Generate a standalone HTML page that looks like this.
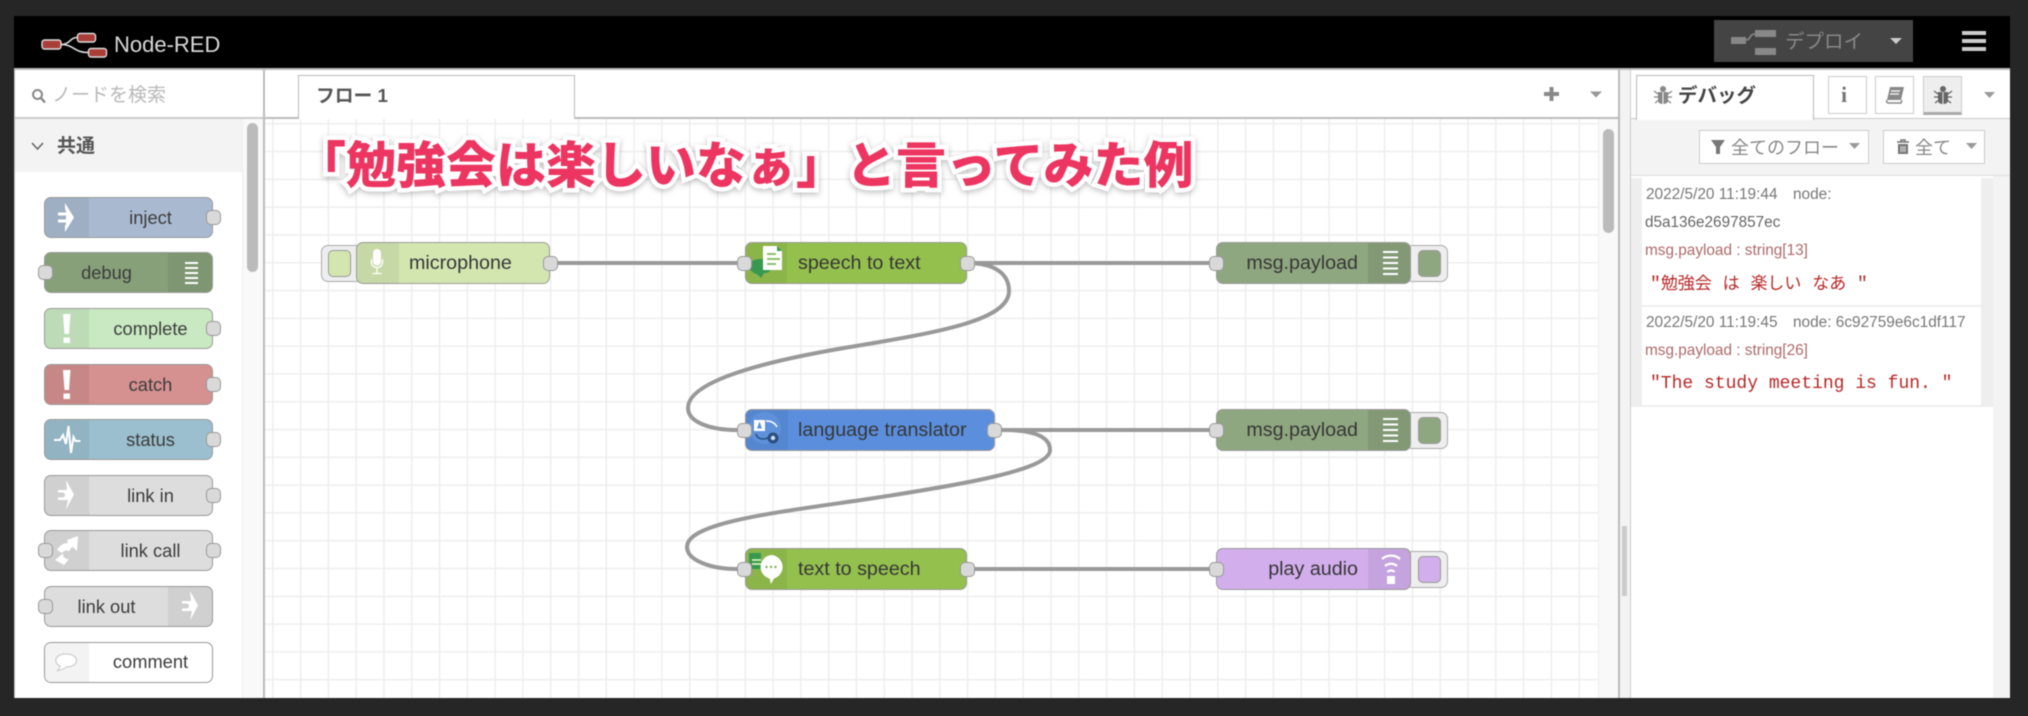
<!DOCTYPE html>
<html lang="ja">
<head>
<meta charset="utf-8">
<title>Node-RED</title>
<style>
html,body{margin:0;padding:0;width:2028px;height:716px;overflow:hidden;background:#262626}
*{box-sizing:border-box}
body{font-family:"Liberation Sans","Noto Sans CJK JP",sans-serif;color:#333;position:relative}
.a,.n,.p,.l,.ic,.b,.t{position:absolute}
#app{position:absolute;left:0;top:0;width:2028px;height:716px;filter:blur(.45px)}
.n{border:1.4px solid #999;border-radius:7px;overflow:hidden}
.ic{top:0;bottom:0;background:rgba(0,0,0,.06)}
.p{width:15px;height:15px;background:#d9d9d9;border:1.4px solid #999;border-radius:5px}
.l{white-space:nowrap;color:#333}
.pl{font-size:18.3px;line-height:20px;text-align:center;color:#3c3c3c}
.wl{font-size:19.7px;line-height:24px;color:#363636}
.b{background:#eee;border:1.4px solid #aaa;border-radius:7px}
.bi{position:absolute;width:23px;height:27px;border:1.4px solid #999;border-radius:5px}
.t{white-space:nowrap}
.btn{position:absolute;background:#fff;border:1.4px solid #ccc}
svg{position:absolute;overflow:visible}
</style>
</head>
<body>
<div id="app">
<!-- frame -->
<div class="a" style="left:14px;top:16px;width:1996px;height:682px;background:#fff"></div>
<!-- header -->
<div class="a" style="left:14px;top:16px;width:1996px;height:52px;background:#000"></div>
<div class="a" style="left:14px;top:68px;width:1996px;height:2px;background:#bbb"></div>
<svg style="left:0;top:0" width="120" height="68">
<path d="M61 44.5C70 44.5 70 37.5 77 37.5M61 44.5C74 44.5 74 52.5 88 52.5" fill="none" stroke="#ddd" stroke-width="1.6"/>
<rect x="42" y="40" width="19" height="9" rx="2.5" fill="#aa3d37" stroke="#ddd" stroke-width="1.4"/>
<rect x="77.5" y="33.5" width="18" height="8.5" rx="2.5" fill="#aa3d37" stroke="#ddd" stroke-width="1.4"/>
<rect x="88.5" y="48.5" width="18" height="8.5" rx="2.5" fill="#aa3d37" stroke="#ddd" stroke-width="1.4"/>
</svg>
<div class="t" style="left:114px;top:32px;font-size:22px;line-height:26px;color:#d8d8d8">Node-RED</div>
<div class="a" style="left:1714px;top:20px;width:199px;height:42px;background:#444"></div>
<svg style="left:1714px;top:20px" width="199" height="42">
<rect x="17" y="17" width="15" height="7" fill="#888"/>
<rect x="41" y="10" width="21" height="7" fill="#888"/>
<rect x="41" y="28" width="21" height="7" fill="#888"/>
<path d="M32 20C37 20 35 14 41 14" fill="none" stroke="#888" stroke-width="1.6"/>
<path d="M176 18h12l-6 6z" fill="#ccc"/>
</svg>
<div class="t" style="left:1785px;top:29px;font-size:19.5px;line-height:26px;color:#888">デプロイ</div>
<div class="a" style="left:1962px;top:31px;width:24px;height:4px;background:#ccc"></div>
<div class="a" style="left:1962px;top:39px;width:24px;height:4px;background:#ccc"></div>
<div class="a" style="left:1962px;top:47px;width:24px;height:4px;background:#ccc"></div>

<!-- palette -->
<div class="a" style="left:14px;top:70px;width:249px;height:628px;background:#fff;border-left:1.5px solid #bbb"></div>
<div class="a" style="left:242px;top:119px;width:21px;height:579px;background:#f9f9f9;border-left:1px solid #eee"></div>
<div class="a" style="left:15px;top:117px;width:249px;height:2px;background:#ccc"></div>
<div class="a" style="left:263px;top:70px;width:1.5px;height:628px;background:#bbb"></div>
<svg style="left:31px;top:88px" width="16" height="16"><circle cx="6.500" cy="6.500" r="4.500" fill="none" stroke="#888" stroke-width="2"/><path d="M10 10l4 4.500" stroke="#888" stroke-width="2.400"/></svg>
<div class="t" style="left:52px;top:83px;font-size:19px;line-height:26px;color:#b8b8b8">ノードを検索</div>
<div class="a" style="left:15px;top:119px;width:227px;height:53px;background:#f3f3f3"></div>
<svg style="left:30px;top:141px" width="16" height="12"><path d="M2 2l5.500 6L13 2" fill="none" stroke="#666" stroke-width="1.600"/></svg>
<div class="t" style="left:57px;top:134px;font-size:19px;line-height:26px;font-weight:700;color:#555">共通</div>
<div class="a" style="left:247px;top:123px;width:11px;height:149px;background:#bbb;border-radius:6px"></div>

<!-- palette nodes -->
<div class="n" style="left:44px;top:197px;width:169px;height:41px;background:#a9bad0"><div class="ic" style="left:0;width:44px"></div></div>
<svg style="left:44px;top:197px" width="44" height="41"><path d="M21 6L30 20.500 21 35V29L25.500 20.500 21 12zM14 15.500h8v3h-8zM14 22.500h8v3h-8zM22 13l5 7.500-5 7.500z" fill="#fff"/></svg>
<div class="l pl" style="left:88px;top:208px;width:125px">inject</div>
<div class="p" style="left:206px;top:210px"></div>

<div class="n" style="left:44px;top:252px;width:169px;height:41px;background:#87a07a"><div class="ic" style="right:0;width:44px"></div></div>
<svg style="left:185px;top:262px" width="14" height="24"><path d="M0 1h13M0 6h13M0 11h13M0 16h13M0 21h13" stroke="#fff" stroke-width="2"/></svg>
<div class="l pl" style="left:44px;top:263px;width:125px">debug</div>
<div class="p" style="left:38px;top:265px"></div>

<div class="n" style="left:44px;top:308px;width:169px;height:41px;background:#c9e9c2"><div class="ic" style="left:0;width:44px"></div></div>
<svg style="left:62px;top:314px" width="10" height="30"><path d="M1 0h7.500L7 20H2.500zM1.500 23.500h6.500V29H1.500z" fill="#fff"/></svg>
<div class="l pl" style="left:88px;top:319px;width:125px">complete</div>
<div class="p" style="left:206px;top:321px"></div>

<div class="n" style="left:44px;top:364px;width:169px;height:41px;background:#d59090"><div class="ic" style="left:0;width:44px"></div></div>
<svg style="left:62px;top:370px" width="10" height="30"><path d="M1 0h7.500L7 20H2.500zM1.500 23.500h6.500V29H1.500z" fill="#fff"/></svg>
<div class="l pl" style="left:88px;top:375px;width:125px">catch</div>
<div class="p" style="left:206px;top:377px"></div>

<div class="n" style="left:44px;top:419px;width:169px;height:41px;background:#9bbfcf"><div class="ic" style="left:0;width:44px"></div></div>
<svg style="left:53px;top:424px" width="27" height="32"><path d="M1 16h6l3-5 3 9 2.500-18 2.500 27 2.500-16 2 4h5" fill="none" stroke="#fff" stroke-width="2"/></svg>
<div class="l pl" style="left:88px;top:430px;width:125px">status</div>
<div class="p" style="left:206px;top:432px"></div>

<div class="n" style="left:44px;top:475px;width:169px;height:41px;background:#ddd"><div class="ic" style="left:0;width:44px"></div></div>
<svg style="left:58px;top:480px" width="17" height="30"><path d="M8 0l8 14.500-8 15 2-9.500H0v-2.500h4.500a2.500 2.500 0 0 0 0-5H0V10h9z" fill="#fff"/></svg>
<div class="l pl" style="left:88px;top:486px;width:125px">link in</div>
<div class="p" style="left:206px;top:488px"></div>

<div class="n" style="left:44px;top:530px;width:169px;height:41px;background:#ddd"><div class="ic" style="left:0;width:44px"></div></div>
<svg style="left:55px;top:536px" width="24" height="30"><path d="M23 0L22 15 17.500 10.500 14 15a5.500 5.500 0 0 0-7 2L2 14C5 9 9 7 13 7l-1-3zM8 17.500a5 5 0 0 0 6 5.500L9 29 0 24z" fill="#fff"/></svg>
<div class="l pl" style="left:88px;top:541px;width:125px">link call</div>
<div class="p" style="left:38px;top:543px"></div>
<div class="p" style="left:206px;top:543px"></div>

<div class="n" style="left:44px;top:586px;width:169px;height:41px;background:#ddd"><div class="ic" style="right:0;width:44px"></div></div>
<svg style="left:182px;top:591px" width="17" height="30"><path d="M8 0l8 14.500-8 15 2-9.500H0v-2.500h4.500a2.500 2.500 0 0 0 0-5H0V10h9z" fill="#fff"/></svg>
<div class="l pl" style="left:44px;top:597px;width:125px">link out</div>
<div class="p" style="left:38px;top:599px"></div>

<div class="n" style="left:44px;top:642px;width:169px;height:41px;background:#fff"><div class="ic" style="left:0;width:44px;background:#f3f3f3"></div></div>
<svg style="left:55px;top:653px" width="24" height="20"><path d="M11 1C17 1 21.500 3.500 21.500 7.500S17 14 11 14C9 16 6 17 2.500 17.500 4 16 5 15 5 13 3 12 .8 10 .8 7.500.8 3.500 5 1 11 1z" fill="#fff" stroke="#ccc" stroke-width="1.200"/></svg>
<div class="l pl" style="left:88px;top:652px;width:125px">comment</div>

<!-- workspace tabs -->
<div class="a" style="left:264px;top:117px;width:1355px;height:1.5px;background:#bbb"></div>
<div class="a" style="left:298px;top:75px;width:277px;height:44px;background:#fff;border:1.4px solid #bbb;border-bottom:none"></div>
<div class="t" style="left:316px;top:84px;font-size:18.8px;line-height:24px;font-weight:700;color:#555">フロー 1</div>
<svg style="left:1540px;top:84px" width="70" height="20"><path d="M4 10h15M11.500 3v14" stroke="#888" stroke-width="4"/><path d="M50 7.500h12l-6 6z" fill="#999"/></svg>

<!-- workspace canvas -->
<div class="a" style="left:265px;top:119px;width:1333px;height:579px;background-color:#fff;background-image:linear-gradient(to right,#eee 1.4px,transparent 1.4px),linear-gradient(to bottom,#eee 1.4px,transparent 1.4px);background-size:27.8px 27.8px;background-position:7px 4px"></div>
<div class="a" style="left:1598px;top:119px;width:21px;height:579px;background:#f9f9f9;border-left:1px solid #eee"></div>
<div class="a" style="left:1603px;top:129px;width:11px;height:104px;background:#bbb;border-radius:6px"></div>
<div class="a" style="left:1618px;top:70px;width:1.5px;height:628px;background:#bbb"></div>
<div class="a" style="left:1620px;top:70px;width:11px;height:628px;background:#f3f3f3;border-right:1.5px solid #ccc"></div>
<div class="a" style="left:1622px;top:526px;width:5px;height:70px;background:#ccc"></div>

<!-- wires -->
<svg style="left:0;top:0" width="2028" height="716">
<g fill="none" stroke="#999" stroke-width="4">
<path d="M557 263H737"/>
<path d="M974 263H1209"/>
<path d="M1002 430H1209"/>
<path d="M974 569H1209"/>
<path d="M967 263C995 263 1009 274 1009 291C1009 320 940 332 856 346C770 360 688 380 688 408C688 422 710 430 737 430"/>
<path d="M1002 430C1030 430 1050 435 1050 450C1050 470 960 485 868 499C780 512 687 522 687 547C687 560 710 569 737 569"/>
</g>
</svg>

<!-- microphone -->
<div class="b" style="left:321px;top:245px;width:44px;height:37px"></div>
<div class="bi" style="left:328px;top:250px;background:#d3e6b0"></div>
<div class="n" style="left:356px;top:242px;width:194px;height:42px;background:#d3e6b0"><div class="ic" style="left:0;width:42px"></div></div>
<svg style="left:368px;top:247px" width="18" height="30"><path d="M9 2c3 0 4 2 4 5v7c0 3-2 4.500-4 4.500S5 17 5 14V7c0-3 1-5 4-5z" fill="#fff" opacity=".95"/><path d="M3.500 12v3c0 3.500 2.500 5.500 5.500 5.500s5.500-2 5.500-5.500v-3M9 20.500V26M4.500 26.500h9" fill="none" stroke="#fff" stroke-width="1.500" opacity=".9"/></svg>
<div class="l wl" style="left:409px;top:251px">microphone</div>
<div class="p" style="left:543px;top:256px"></div>

<!-- speech to text -->
<div class="n" style="left:745px;top:242px;width:222px;height:42px;background:#94c04e"><div class="ic" style="left:0;width:41px"></div></div>
<svg style="left:745px;top:242px" width="42" height="42">
<path d="M4 24C5 19 10 17 15 17S26 19 26 25 21 31 19 31L16 36C14 33 11 32 9 31 6 29 4 27 4 24z" fill="#37984f"/>
<path d="M18 4h14l5 5v19H18z" fill="#fff"/>
<path d="M32 4l5 5h-5z" fill="#37984f"/>
<path d="M22 12h9M22 17h13M22 22h9" stroke="#8cc06c" stroke-width="2"/>
</svg>
<div class="l wl" style="left:798px;top:251px">speech to text</div>
<div class="p" style="left:737px;top:256px"></div>
<div class="p" style="left:960px;top:256px"></div>

<!-- language translator -->
<div class="n" style="left:745px;top:409px;width:250px;height:42px;background:#5b8fdd"><div class="ic" style="left:0;width:42px"></div></div>
<svg style="left:745px;top:409px" width="42" height="42">
<circle cx="20" cy="19" r="16" fill="#6599e2" opacity=".6"/>
<rect x="9" y="11" width="11" height="11" fill="#fff"/>
<path d="M14.500 12.500l-2.500 7h5z" fill="#5b8fdd"/>
<path d="M21 12c5 0 9 2 11 6" fill="none" stroke="#fff" stroke-width="1.400"/>
<path d="M11 25c1 5 7 6 12 4" fill="none" stroke="#2b4f80" stroke-width="1.600"/>
<circle cx="28" cy="29" r="5.500" fill="#2b4f80"/>
<circle cx="28" cy="29" r="2.200" fill="#cfe0f5"/>
</svg>
<div class="l wl" style="left:798px;top:418px">language translator</div>
<div class="p" style="left:737px;top:423px"></div>
<div class="p" style="left:987px;top:423px"></div>

<!-- text to speech -->
<div class="n" style="left:745px;top:548px;width:222px;height:42px;background:#94c04e"><div class="ic" style="left:0;width:41px"></div></div>
<svg style="left:745px;top:548px" width="42" height="42">
<rect x="4" y="5" width="12" height="16" fill="#37984f"/>
<path d="M7 12h9M7 16h9" stroke="#d8efb8" stroke-width="1.800"/>
<path d="M26 7a12 12 0 0 1 3 23.500L26 36l-1.500-5.500A12 12 0 0 1 26 7z" fill="#fff"/>
<circle cx="21.500" cy="19" r="1.200" fill="#7fb054"/><circle cx="26" cy="19" r="1.200" fill="#7fb054"/><circle cx="30.500" cy="19" r="1.200" fill="#7fb054"/>
</svg>
<div class="l wl" style="left:798px;top:557px">text to speech</div>
<div class="p" style="left:737px;top:562px"></div>
<div class="p" style="left:960px;top:562px"></div>

<!-- output nodes -->
<div class="b" style="left:1405px;top:245px;width:43px;height:37px"></div>
<div class="bi" style="left:1418px;top:250px;background:#8fa780"></div>
<div class="n" style="left:1216px;top:242px;width:195px;height:42px;background:#8fa780"><div class="ic" style="right:0;width:42px;background:rgba(0,0,0,.08)"></div></div>
<svg style="left:1383px;top:251px" width="15" height="25"><path d="M0 1h15M0 6.500h15M0 12h15M0 17.500h15M0 23h15" stroke="#fff" stroke-width="2"/></svg>
<div class="l wl" style="right:670px;top:251px">msg.payload</div>
<div class="p" style="left:1209px;top:256px"></div>

<div class="b" style="left:1405px;top:412px;width:43px;height:37px"></div>
<div class="bi" style="left:1418px;top:417px;background:#8fa780"></div>
<div class="n" style="left:1216px;top:409px;width:195px;height:42px;background:#8fa780"><div class="ic" style="right:0;width:42px;background:rgba(0,0,0,.08)"></div></div>
<svg style="left:1383px;top:418px" width="15" height="25"><path d="M0 1h15M0 6.500h15M0 12h15M0 17.500h15M0 23h15" stroke="#fff" stroke-width="2"/></svg>
<div class="l wl" style="right:670px;top:418px">msg.payload</div>
<div class="p" style="left:1209px;top:423px"></div>

<div class="b" style="left:1405px;top:551px;width:43px;height:37px"></div>
<div class="bi" style="left:1418px;top:556px;background:#d2aeec"></div>
<div class="n" style="left:1216px;top:548px;width:195px;height:42px;background:#d2aeec"><div class="ic" style="right:0;width:42px;background:rgba(0,0,0,.06)"></div></div>
<svg style="left:1380px;top:552px" width="22" height="34"><path d="M2 7c5-4.500 13-4.500 18 0M5 14c3.500-3 8.500-3 12 0M7.500 20c2-2 5-2 7 0" fill="none" stroke="#fff" stroke-width="2.200"/><rect x="7" y="24" width="8" height="8" fill="#fff"/></svg>
<div class="l wl" style="right:670px;top:557px">play audio</div>
<div class="p" style="left:1209px;top:562px"></div>

<!-- title overlay -->
<div class="t" style="left:296px;top:133px;font-family:'Liberation Sans','Noto Sans CJK JP',sans-serif;font-size:50px;line-height:66px;font-weight:900;color:#ec3560;-webkit-text-stroke:9px #fff;paint-order:stroke fill;filter:drop-shadow(0 2px 3px rgba(0,0,0,.25))">「勉強会は楽しいなぁ」と言ってみた例</div>

<!-- sidebar -->
<div class="a" style="left:1631px;top:70px;width:379px;height:628px;background:#fff"></div>
<div class="a" style="left:1631px;top:118px;width:379px;height:58px;background:#f3f3f3;border-top:1.5px solid #ccc;border-bottom:1.5px solid #ddd"></div>
<div class="a" style="left:1636px;top:75px;width:178px;height:45px;background:#fff;border:1.4px solid #bbb;border-bottom:none"></div>
<svg style="left:1654px;top:85px" width="18" height="20"><g fill="#888"><circle cx="9" cy="4" r="3"/><path d="M4 7h10v8c0 3-2 4-5 4s-5-1-5-4z"/></g><path d="M0 6l4 3M18 6l-4 3M0 12h4M18 12h-4M1 18l4-3M17 18l-4-3" stroke="#888" stroke-width="1.300"/><path d="M9 7v12" stroke="#fff" stroke-width="1"/></svg>
<div class="t" style="left:1678px;top:83px;font-size:19.500px;line-height:26px;font-weight:700;color:#444">デバッグ</div>
<div class="btn" style="left:1828px;top:76px;width:39px;height:38px"></div>
<div class="t" style="left:1841px;top:83px;font-family:'Liberation Serif',serif;font-weight:700;font-size:22px;line-height:24px;color:#777">i</div>
<div class="btn" style="left:1875px;top:76px;width:39px;height:38px"></div>
<svg style="left:1885px;top:86px" width="20" height="18"><path d="M5 1h14l-3 13H2z" fill="#888"/><path d="M2 14c-1 3 1 3 2 3h12l1-3" fill="none" stroke="#888" stroke-width="1.500"/><path d="M6 5h9M5 8h9" stroke="#fff" stroke-width="1.200"/></svg>
<div class="btn" style="left:1923px;top:76px;width:39px;height:39px;background:#eee;border-bottom:3px solid #aaa"></div>
<svg style="left:1934px;top:85px" width="18" height="20"><g fill="#666"><circle cx="9" cy="4" r="3"/><path d="M4 7h10v8c0 3-2 4-5 4s-5-1-5-4z"/></g><path d="M0 6l4 3M18 6l-4 3M0 12h4M18 12h-4M1 18l4-3M17 18l-4-3" stroke="#666" stroke-width="1.300"/><path d="M9 7v12" stroke="#eee" stroke-width="1"/></svg>
<svg style="left:1983px;top:90px" width="14" height="10"><path d="M1 2h11l-5.500 6z" fill="#999"/></svg>

<div class="btn" style="left:1699px;top:130px;width:170px;height:34px"></div>
<svg style="left:1711px;top:139px" width="14" height="16"><path d="M0 1h14L9 8v7H5V8z" fill="#777"/></svg>
<div class="t" style="left:1731px;top:135px;font-size:18px;line-height:26px;color:#888">全てのフロー</div>
<svg style="left:1849px;top:142px" width="12" height="8"><path d="M0 1h11L5.500 7z" fill="#999"/></svg>
<div class="btn" style="left:1883px;top:130px;width:102px;height:34px"></div>
<svg style="left:1896px;top:139px" width="14" height="16"><path d="M1 3h12M5 3V1h4v2" fill="none" stroke="#777" stroke-width="1.500"/><path d="M2 5h10v10H2z" fill="#777"/><path d="M5 7v6M7 7v6M9 7v6" stroke="#fff" stroke-width=".8"/></svg>
<div class="t" style="left:1915px;top:135px;font-size:18px;line-height:26px;color:#888">全て</div>
<svg style="left:1966px;top:142px" width="12" height="8"><path d="M0 1h11L5.500 7z" fill="#999"/></svg>

<!-- debug messages -->
<div class="a" style="left:1993px;top:176px;width:17px;height:522px;background:#f3f3f3"></div>
<div class="a" style="left:1631px;top:178px;width:11px;height:227px;background:#eee"></div>
<div class="a" style="left:1981px;top:178px;width:12px;height:227px;background:#eee"></div>
<div class="a" style="left:1642px;top:305px;width:339px;height:1.5px;background:#eee"></div>
<div class="a" style="left:1631px;top:405px;width:362px;height:1.5px;background:#eee"></div>
<div class="t" style="left:1646px;top:185px;font-size:15.400px;line-height:20px;color:#777">2022/5/20 11:19:44</div>
<div class="t" style="left:1793px;top:185px;font-size:15.400px;line-height:20px;color:#777">node:</div>
<div class="t" style="left:1645px;top:213px;font-size:15.300px;line-height:20px;color:#666">d5a136e2697857ec</div>
<div class="t" style="left:1645px;top:241px;font-size:15.350px;line-height:20px;color:#ad6a6a">msg.payload : string[13]</div>
<div class="t" style="left:1650px;top:272px;font-family:'Liberation Mono','Noto Sans CJK JP',monospace;font-size:18px;line-height:26px;color:#b72828">"<span style="font-size:17px">勉強会</span> <span style="font-size:17px">は</span> <span style="font-size:17px">楽しい</span> <span style="font-size:17px">なあ</span> "</div>
<div class="t" style="left:1646px;top:313px;font-size:15.400px;line-height:20px;color:#777">2022/5/20 11:19:45</div>
<div class="t" style="left:1793px;top:313px;font-size:15.400px;line-height:20px;color:#777">node: 6c92759e6c1df117</div>
<div class="t" style="left:1645px;top:341px;font-size:15.350px;line-height:20px;color:#ad6a6a">msg.payload : string[26]</div>
<div class="t" style="left:1650px;top:371px;font-family:'Liberation Mono',monospace;font-size:18px;line-height:26px;color:#b72828">"The study meeting is fun. "</div>
</div>
</body>
</html>
